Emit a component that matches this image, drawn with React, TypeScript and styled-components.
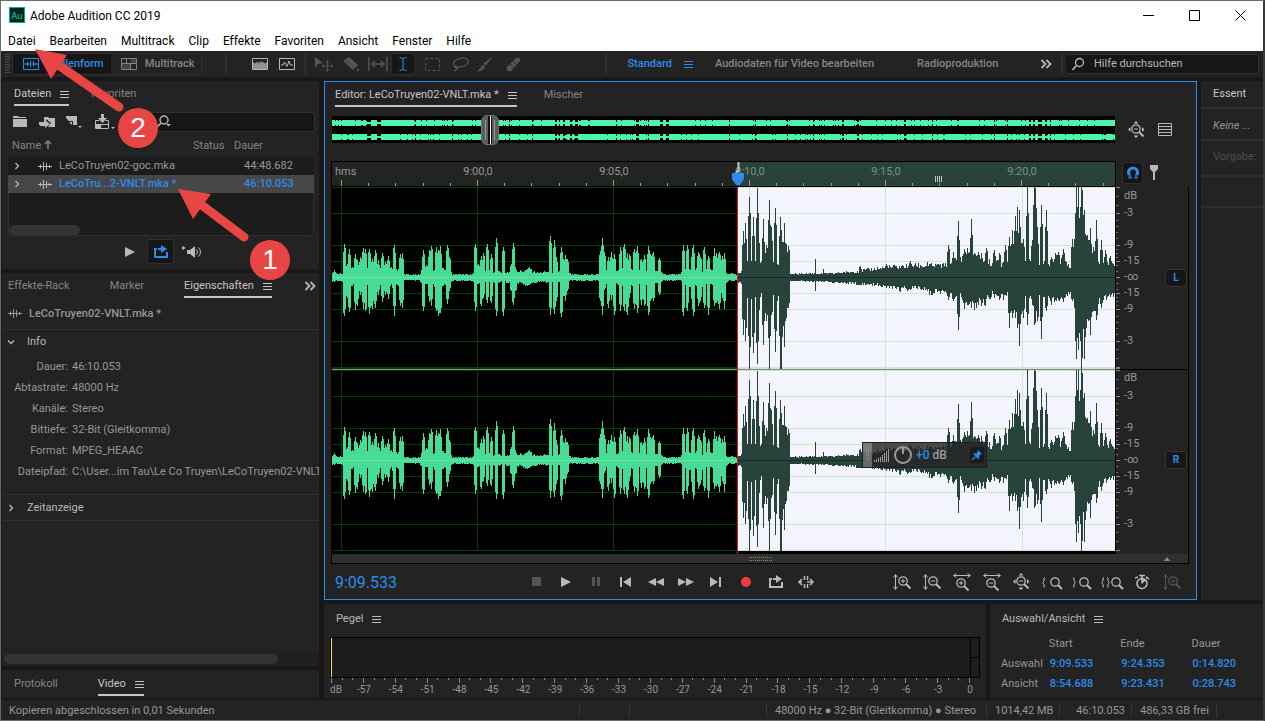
import React from "react";
import styled, { createGlobalStyle, css } from "styled-components";

const c = {
  gap: "#181818",
  panel: "#232323",
  well: "#1c1c1c",
  line: "#323232",
  text: "#979797",
  dim: "#858585",
  bright: "#c6c6c6",
  blue: "#2d8ceb",
  icon: "#b9b9b9",
  off: "#555555",
  wave: "#46dc96",
  waveSel: "#28443a",
  sel: "#f4f4ff",
};

/* Share of the visible range that lies before the selection. */
const SPLIT = "51.75%";

const Global = createGlobalStyle`
  *, *::before, *::after { box-sizing: border-box; }
  body {
    margin: 0;
    background: ${c.gap};
    color: ${c.text};
    font: 11px/16px Roboto, "Open Sans", sans-serif;
  }
  button, input { font: inherit; color: inherit; }
  button { padding: 0; border: 0; background: none; cursor: pointer; }
`;

/* ---------- window frame ---------- */

const Window = styled.div`
  position: relative;
  display: flex;
  flex-direction: column;
  min-height: 100vh;
  border: 1px solid #6b6b6b;
  border-width: 1px 2px 1px 1px;
  border-right-color: #3a3a3a;
  overflow: hidden;
`;

const TitleBar = styled.header`
  display: flex;
  align-items: center;
  height: 28px;
  padding-left: 8px;
  background: #fff;
  color: #000;
  font-size: 12px;
`;

const Title = styled.h1`
  flex: 1;
  margin: 0;
  padding: 1px 0 0 5px;
  font: inherit;
`;

const WindowButton = styled.button`
  display: grid;
  place-items: center;
  width: 46px;
  height: 28px;
  color: #000;
`;

const MenuBar = styled.nav`
  display: flex;
  height: 22px;
  background: #fff;
  color: #000;
  font-size: 12px;
`;

const MenuItem = styled.button`
  padding: 1px 7px 0;
`;

/* ---------- toolbar ---------- */

const ToolBar = styled.div`
  display: flex;
  align-items: center;
  height: 26px;
  background: ${c.panel};
  color: ${c.dim};
`;

const Grip = styled.span`
  width: 5px;
  height: 20px;
  margin: 0 2px 0 4px;
  background: repeating-linear-gradient(#4a4a4a 0 1px, transparent 1px 2px);
`;

const Segment = styled.div`
  display: flex;
  height: 22px;
  border: 1px solid #303030;
  border-radius: 3px;
  overflow: hidden;
`;

const SegmentButton = styled.button<{ $on?: boolean }>`
  display: flex;
  align-items: center;
  gap: 8px;
  padding: 0 7px 0 10px;
  font-weight: 500;
  ${(p) => p.$on && css`color: ${c.blue}; background: #161616;`}
`;

const Divider = styled.span<{ $before: number; $after: number }>`
  flex: none;
  width: 2px;
  height: 22px;
  margin: 0 ${(p) => p.$after}px 0 ${(p) => p.$before}px;
  background: #2d2d2d;
`;

const ToolButton = styled.button<{ $on?: boolean; $off?: boolean; $w?: number }>`
  display: grid;
  place-items: center;
  flex: none;
  width: ${(p) => p.$w ?? 27}px;
  height: 22px;
  color: ${(p) => (p.$off ? c.off : c.icon)};
  ${(p) => p.$on && css`
    color: ${c.blue};
    background: #161616;
    border: 1px solid #303030;
    border-radius: 3px;
  `}
`;

const Workspaces = styled.nav`
  display: flex;
  flex: 1;
  align-items: center;
  padding-left: 20px;
  font-weight: 500;
`;

const Workspace = styled.button<{ $on?: boolean; $gap: number }>`
  display: flex;
  align-items: center;
  gap: 12px;
  margin-right: ${(p) => p.$gap}px;
  white-space: nowrap;
  color: ${(p) => (p.$on ? c.blue : c.dim)};
`;

const More = styled.button`
  display: grid;
  place-items: center;
  color: ${c.icon};
  margin-left: auto;
`;

const HelpSearch = styled.label`
  display: flex;
  align-items: center;
  gap: 9px;
  width: 194px;
  height: 20px;
  margin-right: 4px;
  padding-left: 5px;
  background: #161616;
  border: 1px solid #303030;
  border-radius: 3px;
  color: ${c.icon};
`;

const BareInput = styled.input`
  flex: 1;
  min-width: 0;
  padding: 0;
  border: 0;
  outline: 0;
  background: none;
  color: ${c.icon};
  &::placeholder { color: ${c.icon}; opacity: 1; }
`;

/* ---------- panel grid ---------- */

const Main = styled.main`
  display: grid;
  grid-template-columns: 317px minmax(0, 1fr);
  gap: 5px;
  flex: 1;
  padding: 4px 0 2px 1px;
`;

const Stack = styled.div`
  display: flex;
  flex-direction: column;
  gap: 4px;
  min-width: 0;
`;

const Split = styled.div<{ $columns: string; $grow?: boolean }>`
  display: grid;
  grid-template-columns: ${(p) => p.$columns};
  gap: 4px;
  ${(p) => p.$grow && css`flex: 1;`}
`;

const Panel = styled.section<{ $grow?: boolean; $active?: boolean }>`
  display: flex;
  flex-direction: column;
  min-width: 0;
  background: ${c.panel};
  overflow: hidden;
  ${(p) => p.$grow && css`flex: 1;`}
  ${(p) => p.$active && css`border: 1px solid ${c.blue};`}
`;

const Tabs = styled.div<{ $pad: number; $gap: number }>`
  display: flex;
  align-items: flex-start;
  flex: none;
  gap: ${(p) => p.$gap}px;
  padding: 5px ${(p) => p.$pad}px 0;
`;

const Tab = styled.button<{ $on?: boolean }>`
  display: flex;
  align-items: center;
  gap: 9px;
  height: 20px;
  padding-bottom: 2px;
  white-space: nowrap;
  color: ${(p) => (p.$on ? c.bright : c.dim)};
  border-bottom: 2px solid ${(p) => (p.$on ? c.bright : "transparent")};
`;

const TabStrip = styled.div`
  display: flex;
  align-items: center;
  justify-content: space-between;
  padding-right: 3px;
`;

const ScrollTrack = styled.div<{ $bare?: boolean }>`
  flex: none;
  height: 10px;
  margin-top: auto;
  background: ${(p) => (p.$bare ? "none" : "#1f1f1f")};
`;

const ScrollThumb = styled.div<{ $w: number }>`
  width: ${(p) => p.$w}px;
  height: 10px;
  border-radius: 5px;
  background: #333;
`;

/* ---------- files ---------- */

const FileTools = styled.div`
  display: flex;
  align-items: center;
  height: 31px;
  padding: 0 4px;
`;

const FileSearch = styled.label`
  display: flex;
  align-items: center;
  flex: 1;
  height: 20px;
  margin-left: 3px;
  padding-left: 28px;
  background: #161616;
  border: 1px solid #303030;
  border-radius: 3px;
  color: ${c.icon};
`;

const FileTable = styled.table`
  width: calc(100% - 11px);
  margin: 0 5px 0 6px;
  border-collapse: collapse;
  table-layout: fixed;
  th {
    height: 20px;
    padding: 0 0 2px 4px;
    text-align: left;
    font-weight: 400;
    color: ${c.dim};
  }
  td { height: 18px; padding: 0; }
  tbody { background: ${c.well}; }
`;

const FileRow = styled.tr<{ $on?: boolean }>`
  ${(p) => p.$on && css`background: #474747; color: ${c.blue}; font-weight: 500;`}
`;

const FileName = styled.span`
  display: flex;
  align-items: center;
  padding-left: 5px;
  white-space: nowrap;
  svg { color: ${c.icon}; margin-right: 7px; }
  svg:first-child { margin-right: 17px; }
`;

const DurationText = styled.span`
  padding-left: 14px;
`;

const FileFill = styled.div`
  display: flex;
  flex-direction: column;
  height: 43px;
  margin: 0 5px 0 6px;
  background: ${c.well};
  border: 1px solid #303030;
  border-top: 0;
  border-radius: 0 0 3px 3px;
`;

const Preview = styled.div`
  display: flex;
  align-items: center;
  gap: 4px;
  height: 33px;
  padding: 0 0 2px 114px;
`;

const LoopToggle = styled(ToolButton)`
  height: 25px;
`;

/* ---------- properties ---------- */

const FileHeading = styled.div`
  flex: none;
  display: flex;
  align-items: center;
  gap: 7px;
  height: 32px;
  padding-left: 6px;
  border-bottom: 1px solid ${c.line};
  font-weight: 500;
`;

const Disclosure = styled.button<{ $rule?: boolean }>`
  display: flex;
  align-items: center;
  gap: 12px;
  height: ${(p) => (p.$rule ? 27 : 23)}px;
  padding-left: 5px;
  color: ${c.icon};
  border: solid ${c.line};
  border-width: ${(p) => (p.$rule ? "1px 0" : "0")};
`;

const Facts = styled.dl`
  display: grid;
  grid-template-columns: 66px minmax(0, 1fr);
  grid-auto-rows: 21px;
  column-gap: 4px;
  align-items: center;
  margin: 3px 0 12px;
  dt { text-align: right; }
  dd { margin: 0; white-space: nowrap; }
`;

const PropScroll = styled(ScrollTrack)`
  margin: auto 0 2px 2px;
`;

const LogPanel = styled(Panel)`
  flex: none;
  padding: 1px 0 2px;
`;

/* ---------- editor ---------- */

const OverviewRow = styled.div`
  display: grid;
  grid-template-columns: minmax(0, 1fr) 74px;
  height: 27px;
  margin: 9px 7px 18px 7px;
`;

const Overview = styled.div`
  position: relative;
  background: #000;
  svg { display: block; width: 100%; height: 100%; }
`;

const RangeHandle = styled.div`
  position: absolute;
  top: -1px;
  left: 19%;
  display: flex;
  align-items: center;
  justify-content: space-between;
  width: 18px;
  height: 30px;
  padding: 0 3px;
  border: 1px solid #707070;
  border-radius: 6px;
  background: linear-gradient(90deg, #5c5c5c 6px, #111 6px 8px, #fff 8px 9px, #111 9px 10px, #5c5c5c 10px);
  &::before, &::after { content: ""; width: 1px; height: 20px; background: #999; }
`;

const SideIcons = styled.div`
  display: flex;
  align-items: center;
  gap: 1px;
  padding-left: 8px;
`;

const WaveFrame = styled.div`
  display: flex;
  flex-direction: column;
  flex: 1;
  margin: 0 7px 0 6px;
`;

const WaveHead = styled.div`
  display: grid;
  grid-template-columns: minmax(0, 1fr) 73px;
`;

const WaveGrid = styled(WaveHead)`
  flex: 1;
`;

const Ruler = styled.div`
  position: relative;
  display: grid;
  grid-template-columns: 78fr repeat(5, 136fr) 25fr;
  height: 26px;
  padding-top: 2px;
  text-align: center;
  border: 1px solid #000;
  color: ${c.text};
  background: linear-gradient(90deg, ${c.panel} ${SPLIT}, #29433a ${SPLIT});
  > svg { position: absolute; left: 0; bottom: 0; width: 100%; height: 6px; }
`;

const RulerUnit = styled.span`
  padding-left: 3px;
  text-align: left;
`;

const Faded = styled.span`
  color: #80908a;
`;

const RulerGrip = styled.i`
  position: absolute;
  left: 77%;
  top: 14px;
  width: 8px;
  height: 6px;
  background: repeating-linear-gradient(90deg, #c0c8c4 0 1px, transparent 1px 2px);
`;

const HeadIcons = styled.div`
  display: flex;
  align-items: center;
  padding: 0 0 3px 6px;
`;

const Tracks = styled.div`
  position: relative;
  display: flex;
  flex-direction: column;
  padding-bottom: 3px;
  background: #000;
  border: solid #000;
  border-width: 0 1px;
`;

const Track = styled.div`
  position: relative;
  flex: 1;
  min-height: 120px;
  background: linear-gradient(90deg, #000 ${SPLIT}, ${c.sel} ${SPLIT});
  & + & { border-top: 1px solid #858985; }
  svg { position: absolute; inset: 0; width: 100%; height: 100%; }
`;

const Playhead = styled.div`
  position: absolute;
  top: 0;
  bottom: 0;
  left: ${SPLIT};
  width: 1px;
  background: #e01b1b;
`;

const PlayheadCap = styled.svg`
  && { left: calc(${SPLIT} - 5px); top: 0; width: 12px; height: 25px; }
`;

const Levels = styled.div`
  display: flex;
  flex-direction: column;
  padding-bottom: 3px;
  border-right: 1px solid #000;
`;

const Level = styled.div`
  display: grid;
  grid-template-columns: 8px 41px 22px;
  align-items: center;
  flex: 1;
  & + & { border-top: 1px solid #000; }
  > svg { width: 5px; height: 100%; min-height: 0; }
`;

const Scale = styled.div`
  display: grid;
  height: 100%;
  grid-template-rows: 17fr 18fr 15fr repeat(5, 16fr) 16fr 16fr 19fr;
  align-items: center;
  line-height: 12px;
`;

const Row = styled.span<{ $row: number }>`
  grid-row: ${(p) => p.$row};
`;

const ChannelButton = styled.button`
  width: 22px;
  height: 18px;
  border: 1px solid #343434;
  border-radius: 3px;
  background: #171717;
  color: ${c.blue};
  font-size: 10px;
  font-weight: 700;
`;

const WaveScroll = styled.div`
  display: flex;
  align-items: center;
  height: 10px;
  padding: 0 18px 0 417px;
  justify-content: space-between;
  background: #303030;
  border: solid #000;
  border-width: 0 1px 1px;
  color: #8b8b8b;
`;

const Hud = styled.div`
  position: absolute;
  left: 67.7%;
  bottom: 86px;
  display: flex;
  align-items: center;
  width: 125px;
  height: 26px;
  background: linear-gradient(90deg, rgba(110, 110, 110, 0.9) 9px, rgba(38, 38, 38, 0.82) 9px);
  border: 1px solid #1e1e1e;
  color: #9a9a9a;
  font-size: 12px;
  font-weight: 500;
  b { color: ${c.blue}; font-weight: 500; }
`;

const HudPin = styled.button`
  display: grid;
  place-items: center;
  width: 14px;
  height: 16px;
  margin-left: auto;
  margin-right: 2px;
  background: #1a1a1a;
  border-radius: 2px;
  color: ${c.blue};
`;

const Transport = styled.div`
  display: flex;
  align-items: center;
  height: 35px;
  padding: 0 9px 0 10px;
`;

const Clock = styled.output`
  flex: none;
  width: 186px;
  color: ${c.blue};
  font-size: 16px;
  line-height: 20px;
  padding-top: 2px;
`;

const ButtonRow = styled.div<{ $end?: boolean }>`
  display: flex;
  margin-left: ${(p) => (p.$end ? "auto" : "0")};
`;

/* ---------- essential sound ---------- */

const SideItem = styled.div<{ $h: number; $tone?: string; $italic?: boolean; $top?: number }>`
  height: ${(p) => p.$h}px;
  padding: ${(p) => p.$top ?? 0}px 0 0 12px;
  border-bottom: 2px solid #2f2f2f;
  color: ${(p) => p.$tone ?? c.text};
  font-style: ${(p) => (p.$italic ? "italic" : "normal")};
  white-space: nowrap;
`;

/* ---------- levels and selection ---------- */

const PanelHead = styled.h2`
  display: flex;
  align-items: center;
  gap: 9px;
  margin: 0;
  padding: 7px 12px 0;
  font: inherit;
  color: ${c.icon};
`;

const Meter = styled.div`
  display: grid;
  grid-template-columns: 1px 1fr 9px;
  height: 41px;
  margin: 10px 6px 0 6px;
  background: #1c1c1c;
  border: 1px solid #000;
`;

const MeterMark = styled.span`
  background: #f5e800;
`;

const MeterPeak = styled.span`
  border-left: 1px solid #000;
  background: linear-gradient(transparent 19px, #000 19px 20px, transparent 20px);
`;

const MeterTicks = styled.svg`
  display: block;
  width: calc(100% - 23px);
  height: 5px;
  margin-left: 7px;
`;

const MeterScale = styled.div`
  display: grid;
  grid-template-columns: 18fr repeat(20, 32fr);
  margin: 0 0 1px 6px;
  font-size: 10px;
  line-height: 14px;
  text-align: center;
  white-space: nowrap;
  span:first-child { text-align: left; }
`;

const RangeTable = styled.table`
  margin: 7px 0 0 11px;
  border-collapse: collapse;
  th, td { height: 20px; padding: 0; text-align: left; font-weight: 400; }
  th:first-child { width: 48px; }
  td, thead th { width: 72px; }
  td { color: ${c.blue}; font-weight: 500; padding-left: 1px; }
`;

/* ---------- status ---------- */

const Status = styled.footer`
  display: flex;
  align-items: center;
  height: 20px;
  padding: 1px 46px 0 8px;
  background: ${c.panel};
`;

const Message = styled.span`
  flex: 1;
`;

const Cell = styled.span<{ $w: number; $end?: boolean }>`
  width: ${(p) => p.$w}px;
  height: 14px;
  line-height: 14px;
  padding: 0 6px 0 8px;
  border-left: 1px solid #363636;
  white-space: nowrap;
  text-align: ${(p) => (p.$end ? "right" : "left")};
`;

const LastCell = styled(Cell)`
  border-right: 1px solid #363636;
`;

/* ---------- annotations ---------- */

const Arrows = styled.svg`
  position: absolute;
  left: 0;
  top: 0;
  pointer-events: none;
`;

const Badge = styled.span<{ $x: number; $y: number }>`
  position: absolute;
  left: ${(p) => p.$x}px;
  top: ${(p) => p.$y}px;
  width: 40px;
  height: 40px;
  border-radius: 50%;
  background: #e84545;
  color: #fff;
  font: 28px/40px "Liberation Sans", sans-serif;
  text-align: center;
`;

/* ---------- icons ---------- */

type IconProps = { w?: number; h?: number; children: React.ReactNode };
const Svg = ({ w = 16, h = 16, children }: IconProps) => (
  <svg width={w} height={h} viewBox={`0 0 ${w} ${h}`} fill="none" stroke="currentColor" aria-hidden="true">
    {children}
  </svg>
);

const Burger = () => (
  <Svg w={9} h={9}><path d="M0 1.5h9M0 4.5h9M0 7.5h9" /></Svg>
);
const WaveGlyph = () => (
  <Svg w={14} h={11}><path d="M0 5.5h14M2.5 3.5v4M5.5 1v9M8.5 2v7M11.5 4v3" /></Svg>
);
const Chevron = ({ down }: { down?: boolean }) => (
  <Svg w={8} h={8}>
    <path strokeWidth="1.3" d={down ? "M1 2.5l3 3 3-3" : "M2.5 1l3 3-3 3"} />
  </Svg>
);
const DoubleChevron = () => (
  <Svg w={12} h={10}><path strokeWidth="1.8" d="M1.5 1l4 4-4 4M6.5 1l4 4-4 4" /></Svg>
);
const Lens = () => (
  <Svg w={14} h={14}><circle cx="8.5" cy="5.5" r="4" strokeWidth="1.3" /><path strokeWidth="1.6" d="M5.5 8.5L1.5 13" /></Svg>
);

const ZoomGlyph = ({ kind }: { kind: string }) => {
  const x = kind[0] === "v" ? 11 : 9;
  const y = kind[0] === "h" ? 10 : 8;
  return (
    <Svg w={20} h={18}>
      {kind[0] === "v" && (
        <path d="M3.5 2v14M1.5 4.5l2-3 2 3M1.5 13.5l2 3 2-3" />
      )}
      {kind[0] === "h" && (
        <path d="M2 2.5h16M4.5 .5l-3 2 3 2M15.5 .5l3 2-3 2" />
      )}
      {kind === "all" && (
        <path fill="currentColor" stroke="none" d="M9 0l2.5 2.5h-5zM9 17l2.5-2.5h-5zM1 8.5l2.5-2.5v5zM17.5 8.5L15 6v5z" />
      )}
      <circle cx={x} cy={y} r="4.2" strokeWidth="1.3" />
      <path strokeWidth="2" d={`M${x + 3} ${y + 3}l4.5 4.5`} />
      <path d={`M${x - 2} ${y}h4${kind.endsWith("+") ? `M${x} ${y - 2}v4` : ""}`} />
    </Svg>
  );
};
const BraceZoom = ({ d, x }: { d: string; x: number }) => (
  <Svg w={24} h={18}>
    <path d={d} />
    <circle cx={x} cy="9" r="4.2" strokeWidth="1.3" />
    <path strokeWidth="2" d={`M${x + 3} 12l4 4`} />
  </Svg>
);
const LoopGlyph = () => (
  <Svg w={16} h={14}>
    <path strokeWidth="2" d="M4 4H2v8h12V7M5 4h4" />
    <path fill="currentColor" stroke="none" d="M8 0l6 4-6 4z" />
  </Svg>
);
const PinGlyph = () => (
  <Svg w={12} h={12}>
    <path fill="currentColor" stroke="none" d="M7 1l4 4-1.5.5-1.5 1.5.3 2.5-1 .5L2.5 5.2l.5-1 2.5.3L6.5 3z" />
    <path strokeWidth="1.3" d="M4.5 7.5L1 11" />
  </Svg>
);

/* ---------- waveform ---------- */

type Point = [number, number, number];

/* x, rise above and fall below the centre line, in units of a third of a step */
const quietLeft: Point[] = [
  [0, 14, 10], [10, 10, 9], [32, 10, 10], [36, 24, 22], [212, 24, 24], [218, 7, 7], [262, 7, 7], [270, 20, 20],
  [352, 24, 24], [360, 8, 8], [420, 8, 8], [430, 18, 15], [520, 14, 12], [560, 16, 16], [590, 22, 22], [620, 12, 10],
  [645, 15, 12], [710, 18, 15], [716, 7, 7], [798, 8, 8], [805, 24, 20], [985, 20, 18], [992, 8, 8],
  [1046, 8, 8], [1052, 24, 24], [1180, 20, 20], [1188, 7, 7], [1200, 11, 8], [1218, 5, 5],
];
const burstsLeft: Point[] = [
  [6, 20, 12], [37, 100, 115], [45, 40, 60], [51, 85, 102], [61, 30, 20], [69, 70, 95], [77, 50, 85], [85, 60, 50],
  [95, 88, 92], [99, 84, 100], [111, 83, 108], [120, 55, 92], [129, 82, 90], [139, 50, 50], [151, 72, 72],
  [161, 45, 50], [169, 62, 62], [186, 97, 115], [204, 70, 85], [210, 72, 90], [274, 80, 100], [282, 35, 15],
  [291, 80, 72], [297, 94, 84], [313, 90, 100], [318, 80, 115], [325, 92, 105], [346, 97, 78], [352, 60, 40],
  [430, 100, 98], [439, 40, 12], [448, 62, 85], [453, 72, 60], [466, 100, 74], [479, 70, 75], [493, 118, 115],
  [513, 90, 115], [537, 40, 40], [544, 102, 82], [549, 30, 40], [592, 30, 22], [656, 122, 110], [667, 112, 108],
  [674, 60, 70], [688, 90, 118], [695, 55, 55], [701, 65, 68], [707, 55, 40], [804, 78, 70], [810, 117, 110],
  [817, 75, 35], [829, 60, 90], [839, 76, 65], [848, 70, 110], [865, 90, 100], [877, 100, 100], [887, 72, 110],
  [893, 70, 60], [907, 85, 92], [916, 92, 105], [927, 55, 80], [936, 65, 85], [949, 92, 112], [955, 70, 70],
  [964, 76, 70], [982, 58, 50], [1053, 97, 115], [1065, 97, 100], [1080, 76, 70], [1083, 97, 115], [1098, 76, 85],
  [1104, 60, 70], [1116, 90, 90], [1129, 62, 110], [1146, 86, 85], [1152, 72, 75], [1161, 76, 92], [1170, 62, 60],
  [1176, 72, 92],
];
/* same units, x as a distance from the start of the selection */
const quietRight: Point[] = [
  [0, 14, 14], [12, 16, 14], [16, 50, 58], [146, 50, 62], [152, 95, 90], [155, 8, 8], [210, 11, 10], [280, 11, 12],
  [335, 15, 15], [365, 18, 20], [415, 26, 20], [490, 32, 34], [530, 36, 30], [580, 34, 44], [610, 34, 40],
  [640, 42, 50], [680, 66, 70], [710, 62, 80], [740, 52, 72], [765, 40, 50], [800, 44, 54], [815, 50, 60],
  [830, 110, 90], [850, 110, 100], [865, 46, 60], [925, 40, 60], [960, 56, 60], [1000, 34, 40], [1015, 110, 70],
  [1028, 125, 140], [1050, 110, 130], [1070, 60, 80], [1085, 44, 70], [1130, 40, 46], [1160, 34, 40],
];
const burstsRight: Point[] = [
  [16, 137, 170], [23, 162, 190], [35, 240, 272], [45, 180, 225], [58, 268, 258], [61, 120, 120], [75, 175, 202],
  [85, 95, 130], [94, 230, 272], [101, 150, 110], [111, 208, 222], [126, 180, 272], [129, 140, 270], [138, 162, 207],
  [146, 98, 120], [151, 92, 90], [233, 55, 40], [255, 24, 12], [366, 34, 22], [446, 38, 30], [516, 48, 36],
  [568, 44, 40], [600, 40, 40], [630, 95, 65], [646, 75, 70], [660, 168, 155], [662, 130, 120], [678, 85, 92],
  [689, 86, 80], [699, 173, 90], [709, 72, 95], [722, 76, 80], [729, 72, 85], [746, 88, 60], [770, 82, 60],
  [785, 72, 65], [803, 97, 50], [815, 120, 150], [824, 142, 120], [833, 182, 120], [839, 210, 150], [843, 200, 205],
  [848, 150, 120], [856, 115, 120], [867, 272, 140], [884, 112, 80], [889, 270, 140], [893, 268, 135],
  [897, 150, 130], [911, 215, 182], [926, 200, 100], [940, 60, 80], [953, 72, 60], [962, 74, 66], [977, 85, 72],
  [1004, 115, 70], [1011, 126, 110], [1016, 272, 244], [1022, 270, 215], [1030, 272, 272], [1034, 262, 240],
  [1038, 200, 242], [1046, 120, 125], [1057, 146, 170], [1066, 90, 100], [1074, 170, 125], [1089, 110, 90],
  [1103, 80, 50], [1118, 62, 56],
];

const between = (points: Point[], x: number, side: 1 | 2) => {
  for (let i = 1; i < points.length; i++) {
    const a = points[i - 1];
    const b = points[i];
    if (x <= b[0]) return a[side] + ((b[side] - a[side]) * Math.max(0, x - a[0])) / (b[0] - a[0]);
  }
  return points[points.length - 1][side];
};

const noise = (n: number) => {
  const s = Math.sin(n * 12.9898) * 43758.5453;
  return s - Math.floor(s);
};

const tracePath = (quiet: Point[], bursts: Point[], start: number, width: number) => {
  const edge = (side: 1 | 2) =>
    Array.from({ length: width }, (_, i) => {
      const x = i * 3 + 1;
      let level = between(quiet, x, side) * (0.72 + 0.5 * noise(i + side * 97 + start));
      bursts.forEach((b) => {
        const d = Math.abs(b[0] - x);
        const lone = start > 0 && b[0] > 220 && b[0] < 260;
        const tall = b[side] > 130;
        if (d < 2) level = Math.max(level, b[side]);
        else if (d < 5 && !lone) level = Math.max(level, b[side] * ((tall ? 0.6 : 0.72) + 0.2 * noise(i + side)));
      });
      return Math.min(90, Math.round(level / 3));
    });
  const up = edge(1);
  const down = edge(2);
  let d = `M${start} 90`;
  up.forEach((v, i) => { d += `V${90 - v}H${start + i + 1}`; });
  for (let i = width - 1; i >= 0; i--) d += `V${91 + down[i]}H${start + i}`;
  return `${d}Z`;
};

const leftTrace = tracePath(quietLeft, burstsLeft, 0, 406);
const rightTrace = tracePath(quietRight, burstsRight, 406, 377);

const gridRows = [0, 26, 58, 74, 106, 122, 154, 180];
const gridColumns = [9, 145, 281, 417, 553, 690];

const TrackView = () => (
  <Track>
    <svg viewBox="0 0 783 181" preserveAspectRatio="none" shapeRendering="crispEdges" aria-hidden="true">
      {gridRows.map((y) => (
        <React.Fragment key={y}>
          <rect x="0" y={y} width="406" height="1" fill="#063d06" />
          <rect x="406" y={y} width="377" height="1" fill="#cfe6d0" />
        </React.Fragment>
      ))}
      {gridColumns.map((x) => (
        <rect key={x} x={x} y="0" width="1" height="181" fill={x < 406 ? "#063d06" : "#cfe6d0"} />
      ))}
      <path d={leftTrace} fill={c.wave} />
      <path d={rightTrace} fill={c.waveSel} />
      <rect x="0" y="90" width="406" height="1" fill="#6fe0a8" />
      <rect x="406" y="90" width="377" height="1" fill="#1c2b25" />
    </svg>
  </Track>
);

const gaps: [number, number][] = [
  [35, 4], [45, 4], [83, 1], [120, 1], [177, 1], [200, 1], [223, 2], [227, 1], [231, 2], [238, 2], [243, 3],
  [284, 1], [304, 3], [316, 1], [328, 3], [334, 3], [397, 1], [423, 1], [455, 1], [481, 1], [510, 2], [525, 2],
  [572, 2], [600, 1], [662, 1], [675, 1], [697, 2], [701, 2], [706, 4], [713, 2], [718, 1],
];
const overviewPath = (cy: number) => {
  let d = "";
  for (let x = 0; x < 783; x++) {
    const quiet = gaps.some(([g, w]) => x >= g && x < g + w);
    const n = noise(x + cy);
    const h = quiet ? 1 : n > 0.9 ? 2 : 3;
    d += `M${x} ${cy - h}h1v${h * 2}h-1z`;
  }
  return d;
};

const LevelScale = ({ name }: { name: string }) => (
  <Level>
    <svg viewBox="0 0 5 181" preserveAspectRatio="none" shapeRendering="crispEdges" aria-hidden="true">
      {[0, 26, 58, 74, 90, 106, 122, 154, 180].map((y) => (
        <rect key={y} width="4" height="1" y={y} fill="#8a8a8a" />
      ))}
      {[9, 18, 33, 39, 45, 51, 62, 66, 70, 78, 84, 96, 102, 110, 114, 118, 129, 135, 141, 147, 162, 171].map((y) => (
        <rect key={y} width="2" height="1" y={y} fill="#777" />
      ))}
    </svg>
    <Scale>
      <Row $row={1}>dB</Row>
      <Row $row={2}>-3</Row>
      <Row $row={4}>-9</Row>
      <Row $row={5}>-15</Row>
      <Row $row={6}>-∞</Row>
      <Row $row={7}>-15</Row>
      <Row $row={8}>-9</Row>
      <Row $row={10}>-3</Row>
    </Scale>
    <ChannelButton>{name}</ChannelButton>
  </Level>
);

/* ---------- regions ---------- */

const menus = ["Datei", "Bearbeiten", "Multitrack", "Clip", "Effekte", "Favoriten", "Ansicht", "Fenster", "Hilfe"];

const Header = () => (
  <>
    <TitleBar>
      <svg width="16" height="16" viewBox="0 0 16 16" aria-hidden="true">
        <rect x=".5" y=".5" width="15" height="15" fill="#00231f" stroke="#00b294" />
        <text x="8" y="11.5" fill="#00e4bb" fontSize="9" fontFamily="Open Sans" textAnchor="middle">Au</text>
      </svg>
      <Title>Adobe Audition CC 2019</Title>
      <WindowButton aria-label="Minimieren"><Svg w={11} h={11}><path d="M0 5.5h11" /></Svg></WindowButton>
      <WindowButton aria-label="Maximieren"><Svg w={11} h={11}><path d="M.5.5h10v10H.5z" /></Svg></WindowButton>
      <WindowButton aria-label="Schließen"><Svg w={11} h={11}><path d="M.5.5l10 10M10.5.5l-10 10" /></Svg></WindowButton>
    </TitleBar>
    <MenuBar>{menus.map((m) => <MenuItem key={m}>{m}</MenuItem>)}</MenuBar>
  </>
);

const Tools = () => (
  <ToolBar>
    <Grip />
    <Segment>
      <SegmentButton $on>
        <Svg w={16} h={12}><path d="M.5.5h15v11H.5zM1 6h14M4.5 4v4M7.5 3v6M10.5 3.5v5M12.5 5v2" /></Svg>
        Wellenform
      </SegmentButton>
      <SegmentButton>
        <Svg w={16} h={12}>
          <path fill="currentColor" stroke="none" opacity=".35" d="M1 6h8v5H1zM10 1h5v4h-5z" />
          <path d="M.5.5h15v11H.5zM1 5.5h14M5.5 1v4M9.5 6v5" />
        </Svg>
        Multitrack
      </SegmentButton>
    </Segment>
    <Divider $before={23} $after={19} />
    <ToolButton aria-label="Spektralfrequenz">
      <Svg w={16} h={12}>
        <path fill="currentColor" stroke="none" opacity=".75" d="M1 11V5l1-1 1 2 1-2 1 1 1-2 1 3 1-3 1 2 1-2 1 2 1-1 1 2 1-2 1 1v6z" />
        <path d="M.5.5h15v11H.5z" />
      </Svg>
    </ToolButton>
    <ToolButton aria-label="Spektraltonhöhe">
      <Svg w={16} h={12}><path d="M.5.5h15v11H.5zM2 7h2l1.5-3L8 8.5l2-5.5 1.5 4H14" /></Svg>
    </ToolButton>
    <Divider $before={4} $after={4} />
    <ToolButton $off aria-label="Verschieben">
      <Svg w={18} h={16}><path fill="currentColor" stroke="none" d="M0 1l8 6-5 1-3 4z" /><path d="M12.5 5v10M7.5 10h10M11 6.5l1.5-2 1.5 2M11 13.5l1.5 2 1.5-2M9 8.5l-2 1.5 2 1.5M16 8.5l2 1.5-2 1.5" /></Svg>
    </ToolButton>
    <ToolButton $off aria-label="Schneiden">
      <Svg w={18} h={18}><path fill="currentColor" stroke="none" d="M1 6l6-4 9 8-5 5zM14 16h3v-3z" /><path stroke="#2a2a2a" d="M5 6l6 5" strokeDasharray="2 1" /></Svg>
    </ToolButton>
    <ToolButton $off aria-label="Unterschieben">
      <Svg w={20} h={14}><path strokeWidth="1.5" d="M1 0v14M19 0v14M4 7h12M7 4L4 7l3 3M13 4l3 3-3 3" /></Svg>
    </ToolButton>
    <ToolButton $on $w={24} aria-label="Zeitauswahl">
      <Svg w={8} h={14}><path d="M.5.5q3 0 3.5 1.5Q4.5.5 7.5.5M4 2v10M.5 13.5q3 0 3.5-1.5.5 1.5 3.5 1.5" /></Svg>
    </ToolButton>
    <ToolButton $off $w={34} aria-label="Auswahlrechteck">
      <Svg w={15} h={13}><path strokeDasharray="3 2" d="M.5.5h14v12H.5z" /></Svg>
    </ToolButton>
    <ToolButton $off $w={22} aria-label="Lasso">
      <Svg w={17} h={15}>
        <ellipse cx="9" cy="5.5" rx="7.3" ry="4.3" strokeWidth="1.3" transform="rotate(-12 9 5.5)" />
        <path strokeWidth="1.3" d="M3 8.5q-1.5 2 1 2t1 1.5q-1 1.5-3 2" />
      </Svg>
    </ToolButton>
    <ToolButton $off $w={28} aria-label="Pinsel">
      <Svg><path fill="currentColor" stroke="none" d="M16 0L6.5 7.5l2.2 2.2zM5.5 8.2l2.6 2.6Q7 15 0 15.5 4 12.5 5.5 8.2z" /></Svg>
    </ToolButton>
    <ToolButton $off aria-label="Reparaturpinsel">
      <Svg w={18} h={16}><path fill="currentColor" stroke="none" d="M3 11l9-9q3-1 4 1 1 1-1 3l-8 9q-3 1-4-1-1-1 0-3z" /><path strokeDasharray="1 2" d="M2 9q-3-6 5-7" /><path stroke="#2a2a2a" d="M6 8l5 5M9 5l5 5" /></Svg>
    </ToolButton>
    <Divider $before={79} $after={0} />
    <Workspaces>
      <Workspace $on $gap={22}>Standard<Burger /></Workspace>
      <Workspace $gap={43}>Audiodaten für Video bearbeiten</Workspace>
      <Workspace $gap={0}>Radioproduktion</Workspace>
      <More aria-label="Weitere"><DoubleChevron /></More>
    </Workspaces>
    <Divider $before={9} $after={2} />
    <HelpSearch><Lens /><BareInput aria-label="Hilfe durchsuchen" placeholder="Hilfe durchsuchen" /></HelpSearch>
  </ToolBar>
);

const Files = () => (
  <Panel>
    <Tabs $pad={12} $gap={22}>
      <Tab $on>Dateien<Burger /></Tab>
      <Tab>Favoriten</Tab>
    </Tabs>
    <FileTools>
      <ToolButton aria-label="Öffnen">
        <Svg><path fill="currentColor" stroke="none" d="M1 2h5l1 1h7v1H1zM1 5h14v8H1z" /></Svg>
      </ToolButton>
      <ToolButton aria-label="Importieren">
        <Svg><path fill="currentColor" stroke="none" d="M5 3h4l1 1h6v9H9l3-4-5-4v3H5zM0 8h6V6l5 4-5 4v-2H1v-1H0z" /></Svg>
      </ToolButton>
      <ToolButton aria-label="Neu">
        <Svg><path fill="currentColor" stroke="none" d="M0 2h11v9H7V7H3l-3-3zM3 8h3v3zM12 12h4l-2 2z" /></Svg>
      </ToolButton>
      <ToolButton $w={36} aria-label="Einfügen">
        <Svg w={20} h={16}><path d="M.5 6.5h4M.5 6.5v8h13v-8h-3M.5 10.5h13M5.5 11v4" /><path fill="currentColor" stroke="none" d="M6 0h3v4h3L7.5 9 3 4h3zM16 13h4l-2 2zM1 11h4v4H1z" /></Svg>
      </ToolButton>
      <FileSearch>
        <Svg><circle cx="9" cy="6" r="4" strokeWidth="1.4" /><path strokeWidth="1.6" d="M6 9l-4 4" /><path fill="currentColor" stroke="none" d="M11 10h5l-2.5 2.5z" /></Svg>
        <BareInput aria-label="Dateien durchsuchen" />
      </FileSearch>
    </FileTools>
    <FileTable>
      <colgroup><col /><col width="41" /><col width="84" /></colgroup>
      <thead>
        <tr>
          <th>Name <Svg w={8} h={9}><path strokeWidth="1.5" d="M4 9V1M1 4l3-3 3 3" /></Svg></th>
          <th>Status</th><th>Dauer</th>
        </tr>
      </thead>
      <tbody>
        <FileRow>
          <td><FileName><Chevron /><WaveGlyph />LeCoTruyen02-goc.mka</FileName></td>
          <td /><td><DurationText>44:48.682</DurationText></td>
        </FileRow>
        <FileRow $on>
          <td><FileName><Chevron /><WaveGlyph />LeCoTru...2-VNLT.mka *</FileName></td>
          <td /><td><DurationText>46:10.053</DurationText></td>
        </FileRow>
      </tbody>
    </FileTable>
    <FileFill><ScrollTrack $bare><ScrollThumb $w={71} /></ScrollTrack></FileFill>
    <Preview>
      <ToolButton aria-label="Wiedergabe"><Svg w={10} h={10}><path fill="currentColor" stroke="none" d="M0 0l10 5-10 5z" /></Svg></ToolButton>
      <LoopToggle $on aria-label="Schleife"><LoopGlyph /></LoopToggle>
      <ToolButton aria-label="Automatische Wiedergabe">
        <Svg w={20} h={14}><path fill="currentColor" stroke="none" d="M0 1l4 2-4 2zM5 5h3l5-4v12L8 9H5z" /><path d="M14.5 4.5q2 2.5 0 5M16.5 2.5q4 4.5 0 9" /></Svg>
      </ToolButton>
    </Preview>
  </Panel>
);

const facts = [
  ["Dauer:", "46:10.053"],
  ["Abtastrate:", "48000 Hz"],
  ["Kanäle:", "Stereo"],
  ["Bittiefe:", "32-Bit (Gleitkomma)"],
  ["Format:", "MPEG_HEAAC"],
  ["Dateipfad:", "C:\\User...im Tau\\Le Co Truyen\\LeCoTruyen02-VNLT"],
];

const Properties = () => (
  <Panel $grow>
    <TabStrip>
      <Tabs $pad={6} $gap={40}>
        <Tab>Effekte-Rack</Tab>
        <Tab>Marker</Tab>
        <Tab $on>Eigenschaften<Burger /></Tab>
      </Tabs>
      <More aria-label="Weitere"><DoubleChevron /></More>
    </TabStrip>
    <FileHeading><WaveGlyph />LeCoTruyen02-VNLT.mka *</FileHeading>
    <Disclosure><Chevron down />Info</Disclosure>
    <Facts>
      {facts.map(([k, v]) => (
        <React.Fragment key={k}><dt>{k}</dt><dd>{v}</dd></React.Fragment>
      ))}
    </Facts>
    <Disclosure $rule><Chevron />Zeitanzeige</Disclosure>
    <PropScroll><ScrollThumb $w={274} /></PropScroll>
  </Panel>
);

const Editor = () => (
  <Panel $active>
    <Tabs $pad={10} $gap={27}>
      <Tab $on>Editor: LeCoTruyen02-VNLT.mka *<Burger /></Tab>
      <Tab>Mischer</Tab>
    </Tabs>
    <OverviewRow>
      <Overview>
        <svg viewBox="0 0 783 27" preserveAspectRatio="none" shapeRendering="crispEdges" aria-hidden="true">
          <path d={overviewPath(7)} fill="#4df5a8" />
          <path d={overviewPath(21)} fill="#4df5a8" />
        </svg>
        <RangeHandle />
      </Overview>
      <SideIcons>
        <ToolButton aria-label="Ganz auszoomen"><ZoomGlyph kind="all" /></ToolButton>
        <ToolButton aria-label="Liste"><Svg w={14} h={13}><path d="M.5.5h13v12H.5zM1 3.5h12M1 6.5h12M1 9.5h12" /></Svg></ToolButton>
      </SideIcons>
    </OverviewRow>
    <WaveFrame>
      <WaveHead>
        <Ruler>
          <RulerUnit>hms</RulerUnit>
          <span>9:00,0</span><span>9:05,0</span><Faded>9:10,0</Faded><Faded>9:15,0</Faded><Faded>9:20,0</Faded>
          <svg viewBox="0 0 783 6" preserveAspectRatio="none" shapeRendering="crispEdges" aria-hidden="true">
            {Array.from({ length: 29 }, (_, i) => (
              <rect key={i} x={Math.round(9 + i * 27.2)} y={i % 5 ? 3 : 0} width="1" height="6" fill="#9a9a9a" />
            ))}
          </svg>
          <RulerGrip />
          <PlayheadCap viewBox="0 0 12 25" aria-hidden="true">
            <path d="M6.5 0v8q0 2-3 2" fill="none" stroke="#c8c8c8" strokeWidth="2" />
            <path d="M0 11h12v6l-4 6H4l-4-6z" fill={c.blue} />
          </PlayheadCap>
        </Ruler>
        <HeadIcons>
          <ToolButton $on $w={21} aria-label="Einrasten">
            <Svg w={14} h={13}>
              <path strokeWidth="3" d="M4 12.5V10Q2.5 8.500 2.500 6.500a4.500 4.500 0 0 1 9 0Q11.500 8.500 10 10v2.500" />
              <path stroke="#161616" d="M1 10h5M8 10h5" />
            </Svg>
          </ToolButton>
          <ToolButton $w={21} aria-label="Marker"><Svg w={10} h={15}><path fill="currentColor" stroke="none" d="M1 0h8v4L6 7v8H4V7L1 4z" /></Svg></ToolButton>
        </HeadIcons>
      </WaveHead>
      <WaveGrid>
        <Tracks>
          <TrackView />
          <TrackView />
          <Playhead />
          <Hud>
            <Svg w={10} h={14}><path strokeDasharray="1 1" d="M3.5 1v11M5.5 1v11" /></Svg>
            <Svg w={17} h={16}><path d="M1.5 13v2M3.5 12v3M5.5 11v4M7.5 10v5M9.5 8v7M11.5 6v9M13.5 4v11M15.5 2v13" /></Svg>
            <Svg w={26} h={20}><circle cx="13" cy="10" r="8" strokeWidth="2" /><path strokeWidth="2" d="M13 3v6" /></Svg>
            <span><b>+0</b> dB</span>
            <HudPin aria-label="Anheften"><PinGlyph /></HudPin>
          </Hud>
        </Tracks>
        <Levels>
          <LevelScale name="L" />
          <LevelScale name="R" />
        </Levels>
      </WaveGrid>
      <WaveScroll>
        <Svg w={24} h={4}><path strokeDasharray="1 1" d="M0 .5h24M0 3.5h24" /></Svg>
        <Svg w={6} h={4}><path fill="currentColor" stroke="none" d="M3 0l3 4H0z" /></Svg>
      </WaveScroll>
    </WaveFrame>
    <Transport>
      <Clock>9:09.533</Clock>
      <ButtonRow>
        <ToolButton $w={30} $off aria-label="Stopp"><Svg w={9} h={9}><path fill="currentColor" stroke="none" d="M0 0h9v9H0z" /></Svg></ToolButton>
        <ToolButton $w={30} aria-label="Wiedergabe"><Svg w={10} h={10}><path fill="currentColor" stroke="none" d="M0 0l10 5-10 5z" /></Svg></ToolButton>
        <ToolButton $w={30} $off aria-label="Pause"><Svg w={8} h={9}><path fill="currentColor" stroke="none" d="M0 0h3v9H0zM5 0h3v9H5z" /></Svg></ToolButton>
        <ToolButton $w={30} aria-label="Zum Anfang"><Svg w={12} h={10}><path fill="currentColor" stroke="none" d="M0 0h2v10H0zM11 0v10L3 5z" /></Svg></ToolButton>
        <ToolButton $w={30} aria-label="Zurückspulen"><Svg w={16} h={8}><path fill="currentColor" stroke="none" d="M8 0v8L0 4zM16 0v8L8 4z" /></Svg></ToolButton>
        <ToolButton $w={30} aria-label="Vorspulen"><Svg w={16} h={8}><path fill="currentColor" stroke="none" d="M0 0v8l8-4zM8 0v8l8-4z" /></Svg></ToolButton>
        <ToolButton $w={30} aria-label="Zum Ende"><Svg w={12} h={10}><path fill="currentColor" stroke="none" d="M9 0h2v10H9zM0 0v10l8-5z" /></Svg></ToolButton>
        <ToolButton $w={30} aria-label="Aufnahme"><Svg w={10} h={10}><circle cx="5" cy="5" r="5" fill="#f03c3c" stroke="none" /></Svg></ToolButton>
        <ToolButton $w={30} aria-label="Schleife"><LoopGlyph /></ToolButton>
        <ToolButton $w={30} aria-label="Auswahl überspringen"><Svg w={18} h={12}><path strokeWidth="1.5" d="M5 3L2 6l3 3M2 6h3M7.5 0v4M7.5 8v4M10.5 0v4M10.5 8v4M10 6h6M13 3l3 3-3 3" /></Svg></ToolButton>
      </ButtonRow>
      <ButtonRow $end>
        <ToolButton $w={30} aria-label="Amplitude einzoomen"><ZoomGlyph kind="v+" /></ToolButton>
        <ToolButton $w={30} aria-label="Amplitude auszoomen"><ZoomGlyph kind="v-" /></ToolButton>
        <ToolButton $w={30} aria-label="Zeit einzoomen"><ZoomGlyph kind="h+" /></ToolButton>
        <ToolButton $w={30} aria-label="Zeit auszoomen"><ZoomGlyph kind="h-" /></ToolButton>
        <ToolButton $w={30} aria-label="Vollständig auszoomen"><ZoomGlyph kind="all" /></ToolButton>
        <ToolButton $w={30} aria-label="Zum In-Point"><BraceZoom x={15} d="M5 5H4v3L2.500 9.500 4 11v3h1" /></ToolButton>
        <ToolButton $w={30} aria-label="Zum Out-Point"><BraceZoom x={14} d="M3 5h1v3l1.500 1.500L4 11v3H3" /></ToolButton>
        <ToolButton $w={30} aria-label="Auf Auswahl"><BraceZoom x={16} d="M4 5H3v3L1.500 9.500 3 11v3h1M7 5h1v3l1.500 1.500L8 11v3H7" /></ToolButton>
        <ToolButton $w={30} aria-label="Zeitzoom"><Svg w={14} h={16}><circle cx="7" cy="9.5" r="5" strokeWidth="1.6" /><path strokeWidth="1.6" d="M7 9.5V1M4 1.5h6M0 4l3-1M11 3l3 2" /><path fill="currentColor" stroke="none" d="M7 4.5l4 2-4 3z" /></Svg></ToolButton>
        <ToolButton $w={30} $off aria-label="Zoom zurücksetzen"><ZoomGlyph kind="v+" /></ToolButton>
      </ButtonRow>
    </Transport>
  </Panel>
);

const Essentials = () => (
  <Panel>
    <SideItem $h={28} $top={5} $tone={c.bright}>Essent</SideItem>
    <SideItem $h={32} $top={9} $italic>Keine ...</SideItem>
    <SideItem $h={36} $top={8} $tone="#4c4c4c">Vorgabe:</SideItem>
    <SideItem $h={31} />
  </Panel>
);

const meterLabels = Array.from({ length: 20 }, (_, i) => String(-57 + i * 3));

const Meters = () => (
  <Panel>
    <PanelHead>Pegel<Burger /></PanelHead>
    <Meter><MeterMark /><span /><MeterPeak /></Meter>
    <MeterTicks viewBox="0 0 639 5" preserveAspectRatio="none" shapeRendering="crispEdges" aria-hidden="true">
      {Array.from({ length: 61 }, (_, i) => (
        <rect key={i} x={Math.round(i * 10.63)} width="1" height={i % 3 ? 2 : 5} fill="#8a8a8a" />
      ))}
    </MeterTicks>
    <MeterScale>
      <span>dB</span>
      {meterLabels.map((l) => <span key={l}>{l}</span>)}
    </MeterScale>
  </Panel>
);

const Ranges = () => (
  <Panel>
    <PanelHead>Auswahl/Ansicht<Burger /></PanelHead>
    <RangeTable>
      <thead><tr><th /><th scope="col">Start</th><th scope="col">Ende</th><th scope="col">Dauer</th></tr></thead>
      <tbody>
        <tr><th scope="row">Auswahl</th><td>9:09.533</td><td>9:24.353</td><td>0:14.820</td></tr>
        <tr><th scope="row">Ansicht</th><td>8:54.688</td><td>9:23.431</td><td>0:28.743</td></tr>
      </tbody>
    </RangeTable>
  </Panel>
);

export default function App() {
  return (
    <Window>
      <Global />
      <Header />
      <Tools />
      <Main>
        <Stack>
          <Files />
          <Properties />
          <LogPanel>
            <Tabs $pad={12} $gap={40}>
              <Tab>Protokoll</Tab>
              <Tab $on>Video<Burger /></Tab>
            </Tabs>
          </LogPanel>
        </Stack>
        <Stack>
          <Split $columns="minmax(0, 1fr) 62px" $grow>
            <Editor />
            <Essentials />
          </Split>
          <Split $columns="minmax(0, 1fr) 273px">
            <Meters />
            <Ranges />
          </Split>
        </Stack>
      </Main>
      <Status>
        <Message>Kopieren abgeschlossen in 0,01 Sekunden</Message>
        <Cell $w={50} /><Cell $w={137} />
        <Cell $w={220}>48000 Hz ● 32-Bit (Gleitkomma) ● Stereo</Cell>
        <Cell $w={73}>1014,42 MB</Cell>
        <Cell $w={72} $end>46:10.053</Cell>
        <LastCell $w={86}>486,33 GB frei</LastCell>
      </Status>
      <Arrows width="300" height="280" viewBox="0 0 300 280" aria-hidden="true">
        <g stroke="#e84545" strokeWidth="9" strokeLinecap="round">
          <path d="M56 63l62 43M198 202l45 34" />
        </g>
        <path fill="#e84545" d="M34 48l32 6-16 24zM177 188l33 5-18 25z" />
      </Arrows>
      <Badge $x={117} $y={107}>2</Badge>
      <Badge $x={249} $y={239}>1</Badge>
    </Window>
  );
}
